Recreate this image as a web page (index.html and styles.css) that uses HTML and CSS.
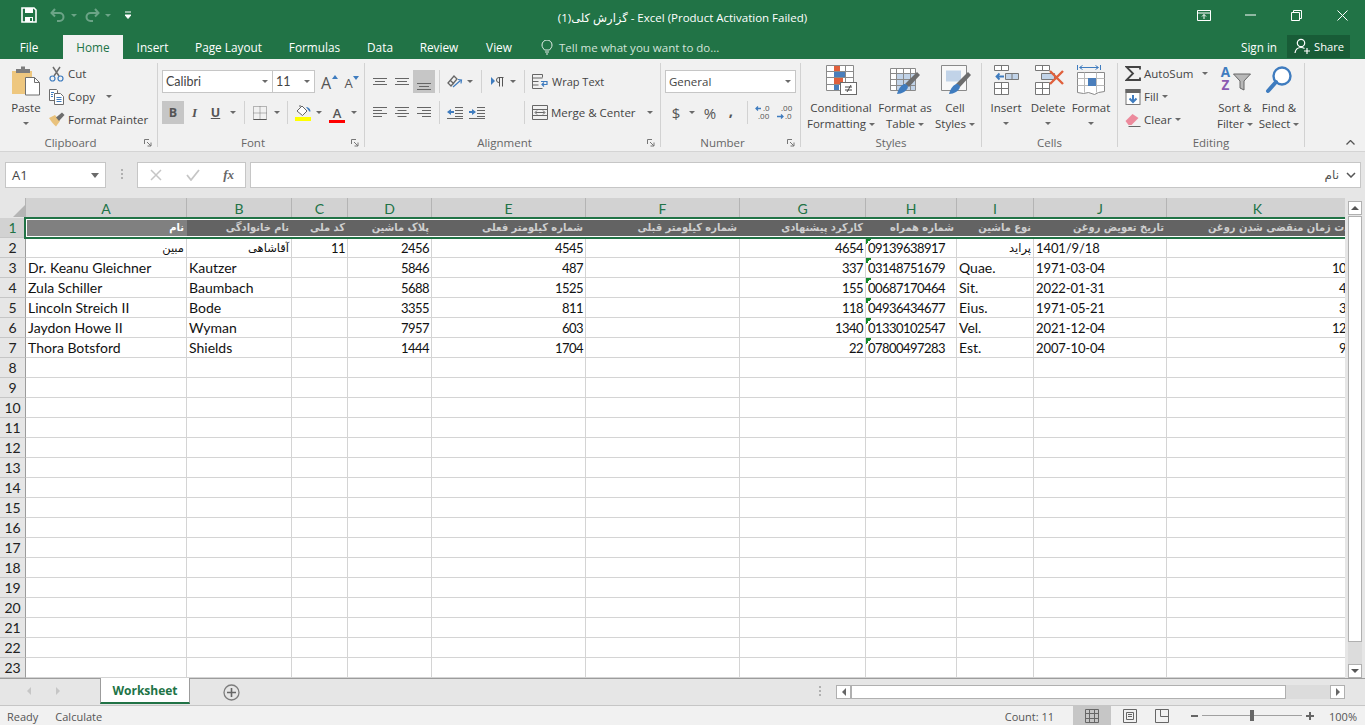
FILE: index.html
```html
<!DOCTYPE html>
<html lang="en">
<head>
<meta charset="utf-8">
<title>Excel</title>
<link rel="stylesheet" href="styles.css">
</head>
<body>
<div class="app">
  <header class="titlebar">
    <div class="qat">
      <svg class="qat-save" width="16" height="16" viewBox="0 0 16 16"><path d="M1 1h12l2 2v12H1z" fill="none" stroke="#fff" stroke-width="1.6"/><rect x="4" y="1" width="8" height="5" fill="#fff"/><rect x="4" y="10" width="8" height="5" fill="#fff"/><rect x="9" y="11" width="2" height="3" fill="#217346"/></svg>
      <svg class="qat-undo" width="16" height="14" viewBox="0 0 16 14"><path d="M5 1 1.500 5 5 8.500M2 5h7.500a4 4 0 0 1 0 8H7" fill="none" stroke="#6ca487" stroke-width="2"/></svg>
      <span class="caret caret-dim qat-c1"></span>
      <svg class="qat-redo" width="16" height="14" viewBox="0 0 16 14"><path d="M11 1l3.500 4L11 8.500M14 5H6.500a4 4 0 0 0 0 8H9" fill="none" stroke="#6ca487" stroke-width="2"/></svg>
      <span class="caret caret-dim qat-c2"></span>
      <svg class="qat-more" width="6" height="8" viewBox="0 0 6 8"><path d="M0 1h6M0 4h6l-3 3.500z" stroke="#fff" fill="#fff"/></svg>
    </div>
    <div class="doc-title">گزارش کلی(1) - Excel (Product Activation Failed)</div>
    <div class="winctl">
      <span class="winbtn"><svg width="14" height="11" viewBox="0 0 14 11"><path d="M.5.500h13v10H.5zM.5 3h13M7 9V4.500M5 6.500l2-2 2 2" fill="none" stroke="#fff"/></svg></span>
      <span class="winbtn"><svg width="11" height="2" viewBox="0 0 11 2"><path d="M0 1h11" stroke="#fff"/></svg></span>
      <span class="winbtn"><svg width="11" height="11" viewBox="0 0 11 11"><path d="M.5 2.500h8v8h-8zM2.500 2.500v-2h8v8h-2" fill="none" stroke="#fff"/></svg></span>
      <span class="winbtn"><svg width="11" height="11" viewBox="0 0 11 11"><path d="M.5.500l10 10M10.500.500l-10 10" fill="none" stroke="#fff"/></svg></span>
    </div>
  </header>

  <nav class="menubar">
    <div class="tabs">
      <span class="tab tab-file">File</span>
      <span class="tab tab-active">Home</span>
      <span class="tab">Insert</span>
      <span class="tab">Page Layout</span>
      <span class="tab">Formulas</span>
      <span class="tab">Data</span>
      <span class="tab">Review</span>
      <span class="tab">View</span>
    </div>
    <div class="tell">
      <svg width="12" height="15" viewBox="0 0 12 15"><path d="M3.500 10C2.500 8.500 1 7.500 1 5a5 5 0 0 1 10 0c0 2.500-1.500 3.500-2.500 5zM4 12h4M5 14h2" fill="none" stroke="#e3eee8"/></svg>
      <span>Tell me what you want to do...</span>
    </div>
    <span class="signin">Sign in</span>
    <span class="share">
      <svg width="17" height="17" viewBox="0 0 17 17"><circle cx="7" cy="5" r="3.700" fill="none" stroke="#fff" stroke-width="1.200"/><path d="M1 15c.5-4 3-5.500 6-5.500 1.500 0 2.500.3 3.500 1M13 10v6M10 13h6" fill="none" stroke="#fff" stroke-width="1.200"/></svg>
      Share
    </span>
  </nav>

  <section class="ribbon">
    <div class="group g-clipboard">
      <div class="body">
        <div class="big w42">
          <span class="big-icon"><svg width="30" height="31" viewBox="0 0 30 31"><rect x="1" y="6" width="20" height="23" fill="#eec77f"/><path d="M5 4h5V1.500h4V4h5v4H5z" fill="#7d7d7d"/><path d="M14.500 12.500h9l5 5v12.500h-14z" fill="#fff" stroke="#6f6f6f"/><path d="M23.500 12.500v5h5" fill="none" stroke="#6f6f6f"/></svg></span>
          <span class="big-label">Paste</span>
          <span class="big-caret"><i class="caret"></i></span>
        </div>
        <div class="list">
          <div class="li"><svg class="li-icon" width="16" height="16" viewBox="0 0 16 16"><path d="M4 1l6 9M11 1L5 10" fill="none" stroke="#6d6d6d" stroke-width="1.500"/><circle cx="3.500" cy="12.500" r="2.500" fill="none" stroke="#3f7cbf" stroke-width="1.200"/><circle cx="11.500" cy="12.500" r="2.500" fill="none" stroke="#3f7cbf" stroke-width="1.200"/></svg><span>Cut</span></div>
          <div class="li"><svg class="li-icon" width="16" height="16" viewBox="0 0 16 16"><path d="M.5.500h7l1 1v10h-8z" fill="#fff" stroke="#6d6d6d"/><path d="M5.500 4.500h6l3 3v8h-9z" fill="#fff" stroke="#6d6d6d"/><path d="M7.500 8.500h5M7.500 10.500h5M7.500 12.500h5M2 3.500h3M2 5.500h2M2 7.500h2" stroke="#3f7cbf"/></svg><span>Copy</span><i class="caret caret-copy"></i></div>
          <div class="li"><svg class="li-icon" width="16" height="15" viewBox="0 0 16 15"><path d="M0 6l6-3 5 6-4 5.500C4 12 2 9 0 6z" fill="#e9c27c"/><path d="M7 5.500l6-5 2.500 2.500-5.500 6z" fill="#6d6d6d"/></svg><span>Format Painter</span></div>
        </div>
      </div>
      <div class="foot"><span class="foot-label">Clipboard</span><span class="launcher"><svg width="8" height="8" viewBox="0 0 8 8"><path d="M.5 5V.5H5M7 7L3 3M3.500 7H7V3.500" fill="none" stroke="#777"/></svg></span></div>
    </div>

    <div class="group g-font">
      <div class="body col">
        <div class="tr first">
          <span class="sel sel-font">Calibri<i class="caret"></i></span>
          <span class="sel sel-size">11<i class="caret"></i></span>
          <span class="tool w29 grow">A<svg width="6" height="4" viewBox="0 0 6 4"><path d="M0 4l3-4 3 4z" fill="#3f7cbf"/></svg></span>
          <span class="tool w15 shrink">A<svg width="6" height="4" viewBox="0 0 6 4"><path d="M0 0l3 4 3-4z" fill="#3f7cbf"/></svg></span>
        </div>
        <div class="tr second">
          <span class="tool w22 on txt-b">B</span>
          <span class="tool w21 txt-i">I</span>
          <span class="tool w21 txt-u">U</span>
          <span class="tool w14"><i class="caret"></i></span>
          <span class="sep"></span>
          <span class="tool w21"><svg width="14" height="14" viewBox="0 0 14 14"><path d="M.5.500h13v13H.5zM7 .5v13M.5 7h13" fill="none" stroke="#777" stroke-dasharray="1 1"/><path d="M.5 13.500h13" stroke="#555"/></svg></span>
          <span class="tool w13"><i class="caret"></i></span>
          <span class="sep"></span>
          <span class="tool w22"><svg width="17" height="17" viewBox="0 0 17 17"><path d="M2 7l5-5 5 5-4.500 4.500z" fill="#fff" stroke="#666"/><path d="M5 3V1" stroke="#666"/><path d="M11 3c2 0 4 1 4.500 4 0 1-1 1-1.500 0z" fill="#3f7cbf"/><rect x="0" y="13" width="16" height="4" fill="#ff0"/></svg></span>
          <span class="tool w10"><i class="caret"></i></span>
          <span class="tool w26 color">A</span>
          <span class="tool w8"><i class="caret"></i></span>
        </div>
      </div>
      <div class="foot"><span class="foot-label">Font</span><span class="launcher"><svg width="8" height="8" viewBox="0 0 8 8"><path d="M.5 5V.5H5M7 7L3 3M3.500 7H7V3.500" fill="none" stroke="#777"/></svg></span></div>
    </div>

    <div class="group g-align">
      <div class="body col">
        <div class="tr first">
          <span class="tool w22"><svg width="14" height="8" viewBox="0 0 14 8"><path d="M0 .5h14M2 3.500h10M0 6.500h14" stroke="#666"/></svg></span>
          <span class="tool w22"><svg width="14" height="8" viewBox="0 0 14 8"><path d="M0 .5h14M2 3.500h10M0 6.500h14" stroke="#666"/></svg></span>
          <span class="tool w22 on"><svg class="push-down" width="14" height="8" viewBox="0 0 14 8"><path d="M0 .5h14M2 3.500h10M0 6.500h14" stroke="#666"/></svg></span>
          <span class="sep"></span>
          <span class="tool w22"><svg width="16" height="15" viewBox="0 0 16 15"><path d="M1 9l6-7 3 3-6 7zM3 6l4 4" fill="none" stroke="#666" stroke-width="1.300"/><path d="M6 13l8-7M11 5.500l3.500.5-.5 3.500" fill="none" stroke="#3f7cbf" stroke-width="1.200"/></svg></span>
          <span class="tool w8"><i class="caret"></i></span>
          <span class="sep sep-para"></span>
          <span class="tool w22"><svg width="13" height="10" viewBox="0 0 13 10"><path d="M0 0l4 4-4 4z" fill="#3f7cbf"/><path d="M8.500 9.500V.5M11.500 9.500V.5M12.500.5H8A2.500 2.500 0 0 0 8 5.500h1" fill="none" stroke="#555"/></svg></span>
          <span class="tool w10"><i class="caret"></i></span>
          <span class="sep sep-wrap"></span>
          <span class="btn-text"><svg width="17" height="15" viewBox="0 0 17 15"><path d="M.5 .5h10M.5 4h10M.5 7.500h6M.5 11h6M.5 14.500h10" stroke="#666"/><path d="M.5 .5v14M10.500.5v3" stroke="#666"/><path d="M9 7.500h6v3h-5M12 8.500l-2 2 2 2" fill="none" stroke="#3f7cbf" stroke-width="1.200"/></svg><span class="wrap-label">Wrap Text</span></span>
        </div>
        <div class="tr second">
          <span class="tool w22"><svg width="14" height="11" viewBox="0 0 14 11"><path d="M0 .5h14M0 3.500h9M0 6.500h14M0 9.500h9" stroke="#666"/></svg></span>
          <span class="tool w22"><svg width="14" height="11" viewBox="0 0 14 11"><path d="M0 .5h14M2.500 3.500h9M0 6.500h14M2.500 9.500h9" stroke="#666"/></svg></span>
          <span class="tool w22"><svg width="14" height="11" viewBox="0 0 14 11"><path d="M0 .5h14M5 3.500h9M0 6.500h14M5 9.500h9" stroke="#666"/></svg></span>
          <span class="sep"></span>
          <span class="tool w22"><svg width="16" height="12" viewBox="0 0 16 12"><path d="M8 .5h8M8 3.500h8M8 6.500h8M8 9.500h8M0 11.500h16" stroke="#666"/><path d="M0 5l4-3v2h3v2H4v2z" fill="#3f7cbf"/></svg></span>
          <span class="tool w22"><svg width="16" height="12" viewBox="0 0 16 12"><path d="M8 .5h8M8 3.500h8M8 6.500h8M8 9.500h8M0 11.500h16" stroke="#666"/><path d="M7 5L3 2v2H0v2h3v2z" fill="#3f7cbf"/></svg></span>
          <span class="sep sep-merge"></span>
          <span class="btn-text"><svg width="16" height="15" viewBox="0 0 16 15"><path d="M.5.500h15v14H.5zM.5 4.500h15M.5 10.500h15M3.500 7.500h9M5 5.500l-2 2 2 2M11 5.500l2 2-2 2" fill="none" stroke="#666"/></svg><span>Merge &amp; Center</span><i class="caret caret-merge"></i></span>
        </div>
      </div>
      <div class="foot"><span class="foot-label">Alignment</span><span class="launcher"><svg width="8" height="8" viewBox="0 0 8 8"><path d="M.5 5V.5H5M7 7L3 3M3.500 7H7V3.500" fill="none" stroke="#777"/></svg></span></div>
    </div>

    <div class="group g-number">
      <div class="body col">
        <div class="tr first"><span class="sel sel-format">General<i class="caret"></i></span></div>
        <div class="tr second nudge">
          <span class="tool w16 sym">$</span>
          <span class="tool w16"><i class="caret"></i></span>
          <span class="tool w20 sym">%</span>
          <span class="tool w22 sym comma"><span class="comma-mark">,</span></span>
          <span class="sep sep-num"></span>
          <span class="tool w22"><svg width="19" height="15" viewBox="0 0 19 15"><text class="dec" x="9" y="6">.0</text><text class="dec" x="4" y="14">.00</text><path d="M7 3.500H2M4 1.500l-2 2 2 2" fill="none" stroke="#3f7cbf" stroke-width="1.300"/></svg></span>
          <span class="tool w22"><svg width="19" height="15" viewBox="0 0 19 15"><text class="dec" x="5" y="6">.00</text><text class="dec" x="9" y="14">.0</text><path d="M1 11.500h6M5 9.500l2 2-2 2" fill="none" stroke="#3f7cbf" stroke-width="1.300"/></svg></span>
        </div>
      </div>
      <div class="foot"><span class="foot-label">Number</span><span class="launcher"><svg width="8" height="8" viewBox="0 0 8 8"><path d="M.5 5V.5H5M7 7L3 3M3.500 7H7V3.500" fill="none" stroke="#777"/></svg></span></div>
    </div>

    <div class="group g-styles">
      <div class="body">
        <div class="big w64">
          <span class="big-icon"><svg width="31" height="30" viewBox="0 0 31 30"><path d="M.5.500h27v25H.5zM8.500.5v25M19.500.5v25M.5 6.500h27M.5 12.500h27M.5 19.500h27" fill="#fff" stroke="#8a8a8a"/><rect x="8" y="1" width="6" height="5" fill="#e0603c"/><rect x="8" y="7" width="11" height="5" fill="#4a7ebb"/><rect x="8" y="13" width="9" height="6" fill="#e0603c"/><rect x="8" y="20" width="5" height="5" fill="#4a7ebb"/><rect x="14.500" y="17.500" width="16" height="12" fill="#fff" stroke="#6a6a6a"/><path d="M19 22h7M19 25h7M25 20l-4 7" stroke="#444" fill="none"/></svg></span>
          <span class="big-label">Conditional<br>Formatting<i class="caret caret-in"></i></span>
        </div>
        <div class="big w64">
          <span class="big-icon"><svg width="31" height="30" viewBox="0 0 31 30"><path d="M.5 3.500h25v22H.5z" fill="#fff" stroke="#8a8a8a"/><rect x="6" y="8" width="19" height="17" fill="#c1d3e8"/><path d="M6.500 3.500v22M13.500 3.500v22M20.500 3.500v22M.5 8.500h25M.5 14.500h25M.5 20.500h25" stroke="#8a8a8a" fill="none"/><path d="M15 19L27 7l3 3-11 12z" fill="#6d6d6d"/><path d="M7 29c1-4 3-8 7-10 2-.5 4 1 4 3-1 4-6 7-11 7z" fill="#3f7cbf"/></svg></span>
          <span class="big-label">Format as<br>Table<i class="caret caret-in"></i></span>
        </div>
        <div class="big w36">
          <span class="big-icon"><svg width="31" height="30" viewBox="0 0 31 30"><path d="M1.500.5h25v25h-25z" fill="#f8f8f8" stroke="#8a8a8a"/><rect x="6" y="5.500" width="15" height="11" fill="#c1d3e8"/><path d="M16 19L28 7l3 3-11 12z" fill="#6d6d6d"/><path d="M9 29c1-4 3-8 7-10 2-.5 4 1 4 3-1 4-6 7-11 7z" fill="#3f7cbf"/></svg></span>
          <span class="big-label">Cell<br>Styles<i class="caret caret-in"></i></span>
        </div>
      </div>
      <div class="foot"><span class="foot-label">Styles</span></div>
    </div>

    <div class="group g-cells">
      <div class="body">
        <div class="big w42">
          <span class="big-icon"><svg width="27" height="30" viewBox="0 0 27 30"><path d="M1.500.5h14v5h-14zM8.500.5v5M1.500 17.500h14v12h-14zM8.500 17.500v12M1.500 23.500h14" fill="#fff" stroke="#777"/><path d="M12.500 8.500h13v6h-13z" fill="#c1d3e8" stroke="#777"/><path d="M19 8.500v6" stroke="#777"/><path d="M11 11.500H4M6.500 8.500l-3 3 3 3" fill="none" stroke="#3f7cbf" stroke-width="1.800"/></svg></span>
          <span class="big-label">Insert</span>
          <span class="big-caret"><i class="caret"></i></span>
        </div>
        <div class="big w42">
          <span class="big-icon nudge-del"><svg width="32" height="30" viewBox="0 0 32 30"><path d="M1.500.5h14v5h-14zM8.500.5v5M1.500 17.500h14v12h-14zM8.500 17.500v12M1.500 23.500h14" fill="#fff" stroke="#777"/><path d="M7.500 8.500h13v6h-13z" fill="#c1d3e8" stroke="#777"/><path d="M16 6l13 13M29 6L16 19" stroke="#e0603c" stroke-width="2.400"/></svg></span>
          <span class="big-label">Delete</span>
          <span class="big-caret"><i class="caret"></i></span>
        </div>
        <div class="big w44">
          <span class="big-icon"><svg width="29" height="30" viewBox="0 0 29 30"><path d="M.5 0v5M23.500 0v5M3 2.500h18M5.500.5l-3 2 3 2M18.500.5l3 2-3 2" fill="none" stroke="#3f7cbf"/><path d="M.5 7.500h27v19l-6 1-4 2-6-2-5 1-6-1z" fill="#fff" stroke="#8a8a8a"/><path d="M.5 13.500h27M.5 20.500h27M7.500 7.500v20M19.500 7.500v20" fill="none" stroke="#bbb"/><rect x="11" y="13" width="8" height="8" fill="#4a7ebb"/></svg></span>
          <span class="big-label">Format</span>
          <span class="big-caret"><i class="caret"></i></span>
        </div>
      </div>
      <div class="foot"><span class="foot-label">Cells</span></div>
    </div>

    <div class="group g-edit">
      <div class="body">
        <div class="list list-edit">
          <div class="li"><svg class="li-icon" width="16" height="15" viewBox="0 0 16 15"><path d="M15 3.500V1H1.500L8 7.500 1.500 14H15v-2.500" fill="none" stroke="#444" stroke-width="1.800"/></svg><span>AutoSum</span><i class="caret caret-sum"></i></div>
          <div class="li"><svg class="li-icon" width="15" height="16" viewBox="0 0 15 16"><rect x=".5" y=".5" width="14" height="15" fill="#fff" stroke="#777"/><rect width="15" height="4" fill="#666"/><path d="M7.500 6v7M4 9.500l3.500 3.500L11 9.500" fill="none" stroke="#3f7cbf" stroke-width="2"/></svg><span>Fill</span><i class="caret caret-in"></i></div>
          <div class="li"><svg class="li-icon" width="15" height="14" viewBox="0 0 15 14"><path d="M0 8l7-7 6 4-7 7H3z" fill="#ec8a9c"/><path d="M3 13.500h12" stroke="#666"/></svg><span>Clear</span><i class="caret caret-in"></i></div>
        </div>
        <div class="big w44">
          <span class="big-icon sort-icon"><span class="sort-letters"><span class="sort-a">A</span><span class="sort-z">Z</span></span><svg class="funnel" width="18" height="18" viewBox="0 0 18 18"><path d="M.5 1h17L11 8v9l-4-2V8z" fill="#b8b8b8" stroke="#666"/></svg></span>
          <span class="big-label">Sort &amp;<br>Filter<i class="caret caret-in"></i></span>
        </div>
        <div class="big w44">
          <span class="big-icon"><svg width="28" height="30" viewBox="0 0 28 30"><circle cx="17" cy="11" r="8.500" fill="#fff" stroke="#3f7cbf" stroke-width="2.400"/><path d="M11 17L3 26" stroke="#3f7cbf" stroke-width="4" stroke-linecap="round"/></svg></span>
          <span class="big-label">Find &amp;<br>Select<i class="caret caret-in"></i></span>
        </div>
      </div>
      <div class="foot"><span class="foot-label">Editing</span></div>
    </div>

    <div class="collapse"><svg width="9" height="5" viewBox="0 0 9 5"><path d="M.5 4.500l4-4 4 4" fill="none" stroke="#555" stroke-width="1.300"/></svg></div>
  </section>

  <section class="formula">
    <div class="namebox"><span>A1</span><i class="caret caret-big"></i></div>
    <div class="dots"><i></i><i></i><i></i></div>
    <div class="fx-btns">
      <svg width="12" height="12" viewBox="0 0 12 12"><path d="M1 1l10 10M11 1L1 11" stroke="#c6c6c6" stroke-width="1.500"/></svg>
      <svg width="14" height="12" viewBox="0 0 14 12"><path d="M1 6l4 5 8-10" fill="none" stroke="#c6c6c6" stroke-width="1.800"/></svg>
      <span class="fx">fx</span>
    </div>
    <div class="fx-input"><span class="fx-val" dir="rtl">نام</span><svg width="10" height="6" viewBox="0 0 10 6"><path d="M1 1l4 4 4-4" fill="none" stroke="#555" stroke-width="1.500"/></svg></div>
  </section>

  <section class="sheet">
    <div class="grid-wrap">
      <table class="grid">
        <colgroup><col class="c-h"><col class="c-a"><col class="c-b"><col class="c-c"><col class="c-d"><col class="c-e"><col class="c-f"><col class="c-g"><col class="c-i8"><col class="c-i"><col class="c-j"><col class="c-k"></colgroup>
        <thead>
          <tr><th class="corner"><svg width="12" height="12" viewBox="0 0 12 12"><path d="M12 0v12H0z" fill="#b5b5b5"/></svg></th><th>A</th><th>B</th><th>C</th><th>D</th><th>E</th><th>F</th><th>G</th><th>H</th><th>I</th><th>J</th><th class="th-k">K</th></tr>
        </thead>
        <tbody>
          <tr class="hdr"><th class="rowsel">1</th><td class="active" dir="rtl">نام</td><td dir="rtl">نام خانوادگی</td><td dir="rtl">کد ملی</td><td dir="rtl">پلاک ماشین</td><td dir="rtl">شماره کیلومتر فعلی</td><td dir="rtl">شماره کیلومتر قبلی</td><td dir="rtl">کارکرد پیشنهادی</td><td dir="rtl">شماره همراه</td><td dir="rtl">نوع ماشین</td><td dir="rtl">تاریخ تعویض روغن</td><td dir="rtl">مدت زمان منقضی شدن روغن</td></tr>
          <tr><th>2</th><td class="fa" dir="rtl">مبین</td><td class="fa" dir="rtl">آقاشاهی</td><td class="n">11</td><td class="n">2456</td><td class="n">4545</td><td></td><td class="n">4654</td><td class="tag">09139638917</td><td class="fa" dir="rtl">پراید</td><td class="dt">1401/9/18</td><td></td></tr>
          <tr><th>3</th><td>Dr. Keanu Gleichner</td><td>Kautzer</td><td></td><td class="n">5846</td><td class="n">487</td><td></td><td class="n">337</td><td class="tag">03148751679</td><td>Quae.</td><td class="dt">1971-03-04</td><td class="n nk">10</td></tr>
          <tr><th>4</th><td>Zula Schiller</td><td>Baumbach</td><td></td><td class="n">5688</td><td class="n">1525</td><td></td><td class="n">155</td><td class="tag">00687170464</td><td>Sit.</td><td class="dt">2022-01-31</td><td class="n nk">4</td></tr>
          <tr><th>5</th><td>Lincoln Streich II</td><td>Bode</td><td></td><td class="n">3355</td><td class="n">811</td><td></td><td class="n">118</td><td class="tag">04936434677</td><td>Eius.</td><td class="dt">1971-05-21</td><td class="n nk">3</td></tr>
          <tr><th>6</th><td>Jaydon Howe II</td><td>Wyman</td><td></td><td class="n">7957</td><td class="n">603</td><td></td><td class="n">1340</td><td class="tag">01330102547</td><td>Vel.</td><td class="dt">2021-12-04</td><td class="n nk">12</td></tr>
          <tr><th>7</th><td>Thora Botsford</td><td>Shields</td><td></td><td class="n">1444</td><td class="n">1704</td><td></td><td class="n">22</td><td class="tag">07800497283</td><td>Est.</td><td class="dt">2007-10-04</td><td class="n nk">9</td></tr>
          <tr><th>8</th><td></td><td></td><td></td><td></td><td></td><td></td><td></td><td></td><td></td><td></td><td></td></tr>
          <tr><th>9</th><td></td><td></td><td></td><td></td><td></td><td></td><td></td><td></td><td></td><td></td><td></td></tr>
          <tr><th>10</th><td></td><td></td><td></td><td></td><td></td><td></td><td></td><td></td><td></td><td></td><td></td></tr>
          <tr><th>11</th><td></td><td></td><td></td><td></td><td></td><td></td><td></td><td></td><td></td><td></td><td></td></tr>
          <tr><th>12</th><td></td><td></td><td></td><td></td><td></td><td></td><td></td><td></td><td></td><td></td><td></td></tr>
          <tr><th>13</th><td></td><td></td><td></td><td></td><td></td><td></td><td></td><td></td><td></td><td></td><td></td></tr>
          <tr><th>14</th><td></td><td></td><td></td><td></td><td></td><td></td><td></td><td></td><td></td><td></td><td></td></tr>
          <tr><th>15</th><td></td><td></td><td></td><td></td><td></td><td></td><td></td><td></td><td></td><td></td><td></td></tr>
          <tr><th>16</th><td></td><td></td><td></td><td></td><td></td><td></td><td></td><td></td><td></td><td></td><td></td></tr>
          <tr><th>17</th><td></td><td></td><td></td><td></td><td></td><td></td><td></td><td></td><td></td><td></td><td></td></tr>
          <tr><th>18</th><td></td><td></td><td></td><td></td><td></td><td></td><td></td><td></td><td></td><td></td><td></td></tr>
          <tr><th>19</th><td></td><td></td><td></td><td></td><td></td><td></td><td></td><td></td><td></td><td></td><td></td></tr>
          <tr><th>20</th><td></td><td></td><td></td><td></td><td></td><td></td><td></td><td></td><td></td><td></td><td></td></tr>
          <tr><th>21</th><td></td><td></td><td></td><td></td><td></td><td></td><td></td><td></td><td></td><td></td><td></td></tr>
          <tr><th>22</th><td></td><td></td><td></td><td></td><td></td><td></td><td></td><td></td><td></td><td></td><td></td></tr>
          <tr><th>23</th><td></td><td></td><td></td><td></td><td></td><td></td><td></td><td></td><td></td><td></td><td></td></tr>
        </tbody>
      </table>
      <div class="selection"></div>
    </div>
    <div class="vscroll">
      <span class="sb-btn"><i class="tri-up"></i></span>
      <span class="sb-thumb"></span>
      <span class="sb-track"></span>
      <span class="sb-btn"><i class="tri-down"></i></span>
    </div>
  </section>

  <section class="sheetbar">
    <div class="nav-arrows"><i class="tri-left"></i><i class="tri-right"></i></div>
    <div class="sheet-tab">Worksheet</div>
    <svg class="add-sheet" width="17" height="17" viewBox="0 0 17 17"><circle cx="8.500" cy="8.500" r="7.500" fill="none" stroke="#7d7d7d" stroke-width="1.300"/><path d="M8.500 4v9M4 8.500h9" stroke="#666" stroke-width="1.600"/></svg>
    <div class="dots dots-h"><i></i><i></i><i></i></div>
    <div class="hscroll">
      <span class="sb-btn h"><i class="tri-left dark"></i></span>
      <span class="sb-thumb h"></span>
      <span class="sb-track h"></span>
      <span class="sb-btn h"><i class="tri-right dark"></i></span>
    </div>
  </section>

  <footer class="status">
    <span class="st-ready">Ready</span>
    <span class="st-calc">Calculate</span>
    <span class="st-count">Count: 11</span>
    <span class="view view-on"><svg width="14" height="14" viewBox="0 0 14 14"><path d="M.5.500h13v13H.5zM4.500.5v13M9.500.5v13M.5 4.500h13M.5 9.500h13" fill="none" stroke="#666"/></svg></span>
    <span class="view"><svg width="14" height="14" viewBox="0 0 14 14"><path d="M.5.500h13v13H.5zM3.500 3.500h7v7h-7zM5 5.500h4M5 7.500h4" fill="none" stroke="#666"/></svg></span>
    <span class="view view-narrow"><svg width="14" height="14" viewBox="0 0 14 14"><path d="M.5.500h13v13H.5zM5.500.5v7h8" fill="none" stroke="#666"/></svg></span>
    <span class="zoom-m"></span>
    <span class="slider"><i class="line l1"></i><i class="knob"></i><i class="line l2"></i></span>
    <span class="zoom-p"></span>
    <span class="st-zoom">100%</span>
  </footer>
</div>
</body>
</html>
```

FILE: styles.css
```css
* { box-sizing: border-box; }
html, body { margin: 0; padding: 0; height: 100%; overflow: hidden; background: #f1f1f1; }
body { font-family: "Open Sans", "DejaVu Sans", sans-serif; font-size: 11.5px; color: #444; }
i { font-style: normal; }
svg { display: block; flex: none; shape-rendering: geometricPrecision; }
.app { width: 1365px; height: 725px; display: flex; flex-direction: column; overflow: hidden; }

/* title bar */
.titlebar { height: 35px; background: #217346; color: #fff; display: grid; grid-template-columns: 1fr auto 1fr; flex: none; }
.qat { display: flex; align-items: center; height: 30px; padding-left: 21px; }
.qat-undo { margin-left: 13px; }
.qat-c1 { margin-left: 5px; }
.qat-redo { margin-left: 7px; }
.qat-c2 { margin-left: 5px; }
.qat-more { margin-left: 14px; }
.doc-title { font-size: 11.5px; line-height: 36px; color: #fff; }
.winctl { display: flex; justify-content: flex-end; }
.winbtn { width: 46px; height: 30px; display: flex; align-items: center; justify-content: center; }

/* menu */
.menubar { height: 24px; background: #217346; color: #fff; display: flex; align-items: stretch; flex: none; }
.tabs { display: grid; grid-template-columns: 63px 60px 59px 93px 79px 52px 66px 54px; font-size: 11.8px; }
.tab { text-align: center; line-height: 25px; color: #fff; }
.tab-file { padding-right: 5px; }
.tab-active { background: #f1f1f1; color: #217346; }
.tell { display: flex; align-items: center; gap: 6px; padding-left: 15px; color: #d3e3da; flex: 1; font-size: 11.5px; }
.signin { line-height: 25px; margin-right: 10px; font-size: 11.7px; }
.share { width: 63px; height: 23px; margin-right: 15px; background: #185c37; display: flex; align-items: center; gap: 3px; padding-left: 7px; font-size: 11.2px; }

/* ribbon */
.ribbon { height: 93px; background: #f1f1f1; border-bottom: 1px solid #d4d4d4; display: flex; flex: none; }
.group { display: flex; flex-direction: column; margin-top: 4px; height: 84px; border-right: 1px solid #d2d2d2; }
.body { height: 75px; margin-top: -4px; display: flex; flex: none; }
.col { flex-direction: column; }
.foot { display: flex; height: 17px; align-items: center; flex: none; }
.foot-label { flex: 1; text-align: center; color: #666; font-size: 11.5px; }
.launcher { width: 16px; height: 17px; display: flex; align-items: center; padding-left: 3px; }
.g-clipboard { width: 158px; }
.g-clipboard .body { padding-left: 5px; }
.g-font { width: 207px; }
.g-font .tr { padding-left: 4px; }
.g-align { width: 296px; }
.g-align .tr { padding-left: 4px; }
.g-number { width: 140px; }
.g-number .tr { padding-left: 4px; }
.g-number .nudge { padding-left: 7px; }
.g-styles { width: 181px; }
.g-styles .body { padding-left: 8px; }
.g-cells { width: 136px; }
.g-cells .body { padding-left: 3px; }
.g-edit { width: 187px; }
.g-edit .body { padding-left: 7px; }
.collapse { flex: 1; display: flex; align-items: flex-end; justify-content: flex-end; padding: 0 10px 6px 0; }

.big { display: flex; flex-direction: column; align-items: center; padding-top: 6px; text-align: center; white-space: nowrap; }
.big-icon { height: 35px; display: flex; align-items: flex-start; justify-content: center; }
.nudge-del { padding-left: 4px; }
.big-label { line-height: 16px; display: block; }
.big-caret { display: block; line-height: 0; height: 16px; padding-top: 6px; }
.w42 { width: 42px; }
.w64 { width: 64px; }
.w36 { width: 36px; }
.w44 { width: 44px; }
.w8 { width: 8px; }
.w10 { width: 10px; }
.w13 { width: 13px; }
.w14 { width: 14px; }
.w15 { width: 15px; }
.w16 { width: 16px; }
.w20 { width: 20px; }
.w21 { width: 21px; }
.w22 { width: 22px; }
.w26 { width: 26px; }
.w29 { width: 29px; }

.list { width: 104px; padding-top: 3px; margin-left: 2px; }
.list-edit { width: 88px; margin-left: 0; }
.li { height: 23px; display: flex; align-items: center; }
.li-icon { margin-right: 3px; }
.li > svg { width: 16px; }

.caret { display: inline-block; width: 0; height: 0; border-style: solid; border-color: #6a6a6a transparent transparent; border-width: 3.500px 3.500px 0; vertical-align: middle; }
.caret-dim { border-top-color: #6ca487; }
.caret-in { margin-left: 3px; }
.caret-copy { margin-left: 11px; }
.caret-sum { margin-left: 9px; }
.caret-merge { margin-left: 8px; }
.caret-big { border-width: 5px 4.500px 0; }

.tr { display: flex; align-items: center; height: 23px; flex: none; }
.first { margin-top: 11px; }
.second { margin-top: 8px; }
.tool { height: 23px; display: flex; align-items: center; justify-content: center; flex: none; }
.on { background: #c6c6c6; }
.push-down { margin-top: 10px; }
.sep { width: 1px; height: 23px; background: #d2d2d2; margin: 0 4px; flex: none; }
.sep-para { margin-left: 7px; }
.sep-wrap { margin-left: 6px; margin-right: 2px; }
.sep-merge { margin-left: 36px; margin-right: 2px; }
.sep-num { margin-left: 5px; }
.btn-text { display: flex; align-items: center; gap: 3px; padding-left: 5px; white-space: nowrap; }
.wrap-label { font-size: 11px; }
.sel { height: 23px; background: #fff; border: 1px solid #c6c6c6; display: flex; align-items: center; justify-content: space-between; padding: 0 4px 0 3px; font-family: "Lato", sans-serif; font-size: 12.5px; flex: none; }
.sel-font { width: 111px; }
.sel-size { width: 43px; margin-left: -1px; }
.sel-format { width: 131px; font-family: "Open Sans", sans-serif; font-size: 11.5px; }
.grow { font-size: 16px; align-items: flex-end; color: #555; line-height: 20px; }
.grow svg { margin: 0 0 14px 1px; }
.shrink { font-size: 13px; color: #555; align-items: flex-end; line-height: 19px; }
.shrink svg { margin: 0 0 13px 0; }
.txt-b { font-weight: 700; font-size: 12.500px; color: #555; }
.txt-i { font-style: italic; font-size: 13px; font-family: "Liberation Serif", serif; color: #555; font-weight: 700; }
.txt-u { text-decoration: underline; font-weight: 700; font-size: 12.500px; color: #555; }
.color { font-size: 13px; font-weight: 600; color: #555; line-height: 14px; background: linear-gradient(#f00, #f00) no-repeat center 19px / 16px 3px; }
.sym { font-size: 15px; color: #555; }
.comma { font-weight: 700; }
.comma-mark { margin-top: -6px; }
.dec { font: 8px "Open Sans", sans-serif; fill: #555; }
.sort-icon { gap: 1px; padding-top: 1px; }
.sort-letters { display: flex; flex-direction: column; width: 13px; font: 700 13.5px/13px "Open Sans", sans-serif; text-align: center; }
.sort-a { color: #3f7cbf; }
.sort-z { color: #8a5ab0; }
.funnel { margin-top: 7px; }

/* formula */
.formula { height: 46px; background: #e6e6e6; display: flex; padding: 10px 4px 0 5px; flex: none; }
.namebox { width: 101px; height: 26px; background: #fff; border: 1px solid #c6c6c6; display: flex; align-items: center; justify-content: space-between; padding: 0 6px; font-size: 13px; color: #444; }
.dots { width: 31px; display: flex; flex-direction: column; gap: 2px; align-items: center; padding-top: 7px; }
.dots i { width: 2px; height: 2px; background: #b0b0b0; }
.fx-btns { width: 109px; height: 26px; background: #fff; border: 1px solid #c6c6c6; display: flex; align-items: center; justify-content: space-between; padding: 0 11px 0 12px; }
.fx { font: italic 700 13px "Liberation Serif", serif; color: #666; }
.fx-input { flex: 1; height: 26px; margin-left: 4px; background: #fff; border: 1px solid #c6c6c6; display: flex; align-items: center; justify-content: flex-end; padding-right: 4px; gap: 7px; }
.fx-val { font: 12px "DejaVu Sans", sans-serif; color: #555; }

/* sheet */
.sheet { height: 480px; display: flex; background: #e6e6e6; flex: none; }
.grid-wrap { width: 1345px; height: 480px; overflow: hidden; position: relative; background: #fff; }
.grid { table-layout: fixed; border-collapse: separate; border-spacing: 0; width: 1359px; font: 14px "Lato", "DejaVu Sans", sans-serif; color: #111; }
.c-h { width: 26px; }
.c-a { width: 161px; }
.c-b { width: 105px; }
.c-c { width: 56px; }
.c-d { width: 84px; }
.c-e { width: 154px; }
.c-f { width: 154px; }
.c-g { width: 126px; }
.c-i8 { width: 91px; }
.c-i { width: 77px; }
.c-j { width: 133px; }
.c-k { width: 192px; }
.grid tr { height: 20px; }
.grid td { height: 20px; padding: 1px 2px 0; border-right: 1px solid #d4d4d4; border-bottom: 1px solid #d4d4d4; overflow: hidden; white-space: nowrap; line-height: 18px; text-align: left; }
.grid th { height: 20px; padding: 0; font-weight: 400; overflow: hidden; line-height: 19px; text-align: center; }
.grid thead th { background: #d2d2d2; color: #217346; border-right: 1px solid #b4b4b4; }
.grid thead .corner { background: #e6e6e6; padding: 0; }
.grid thead .th-k { padding-right: 10px; }
.corner svg { margin: 6px 0 0 13px; }
.grid tbody th { background: #e6e6e6; color: #222; border-right: 1px solid #9c9c9c; border-bottom: 1px solid #c6c6c6; padding-top: 1px; line-height: 18px; }
.grid tbody .rowsel { background: #d2d2d2; color: #217346; }
.hdr td { background: #636363; color: #cfcfcf; border-color: transparent; text-align: right; font: 700 11px/18px "DejaVu Sans Condensed", "DejaVu Sans", sans-serif; }
.hdr .active { background: #808080; color: #fff; }
.n { text-align: right !important; font-size: 13px; letter-spacing: -0.55px; }
.nk { padding-right: 12px !important; }
.dt { font-size: 13px; letter-spacing: -0.1px; }
.fa { text-align: right !important; font: 11.5px/18px "DejaVu Sans", sans-serif; }
.tag { font-size: 13px; letter-spacing: -0.55px; background: linear-gradient(135deg, #118a2a 50%, transparent 50%) no-repeat 0 0 / 6px 6px; }
.selection { position: absolute; left: 24px; top: 19px; width: 1330px; height: 22px; border: 2px solid #217346; box-shadow: inset 0 0 0 1px #fff; pointer-events: none; }

.vscroll { width: 20px; padding: 3px 3px 0 3px; display: flex; flex-direction: column; }
.sb-btn { width: 14px; height: 14px; background: #fff; border: 1px solid #b0b0b0; display: flex; align-items: center; justify-content: center; flex: none; }
.sb-thumb { width: 14px; height: 427px; background: #fff; border: 1px solid #b0b0b0; margin-top: 1px; }
.sb-track { flex: 1; background: #dcdcdc; }
.vscroll .sb-track { height: 22px; flex: none; }
.tri-up { border: solid transparent; border-width: 0 4px 4px; border-bottom-color: #555; width: 0; height: 0; }
.tri-down { border: solid transparent; border-width: 4px 4px 0; border-top-color: #555; width: 0; height: 0; }
.tri-left { border: solid transparent; border-width: 4px 4px 4px 0; border-right-color: #c6c6c6; width: 0; height: 0; display: block; }
.tri-right { border: solid transparent; border-width: 4px 0 4px 4px; border-left-color: #c6c6c6; width: 0; height: 0; display: block; }
.tri-left.dark { border-right-color: #666; }
.tri-right.dark { border-left-color: #666; }

/* sheet tabs */
.sheetbar { height: 28px; background: #e6e6e6; border-top: 1px solid #9c9c9c; border-bottom: 1px solid #c6c6c6; display: flex; flex: none; }
.nav-arrows { width: 100px; display: flex; align-items: center; padding: 0 0 2px 27px; gap: 25px; }
.sheet-tab { width: 90px; height: 26px; background: #fff; border: 1px solid #9c9c9c; border-top: 0; border-bottom: 2px solid #217346; color: #217346; font-weight: 700; font-size: 12px; text-align: center; line-height: 23px; margin-top: -1px; padding-top: 1px; }
.add-sheet { margin: 5px 0 0 33px; }
.dots-h { width: 16px; margin-left: 572px; padding-top: 7px; }
.hscroll { width: 509px; margin-left: 8px; margin-top: 6px; height: 14px; display: flex; }
.sb-btn.h { width: 15px; }
.sb-thumb.h { width: 435px; height: 14px; margin: 0; }

/* status */
.status { flex: 1; background: #f1f1f1; display: flex; align-items: center; font-size: 11px; color: #555; }
.st-ready { margin: 1px 0 0 7px; }
.st-calc { margin: 1px 0 0 17px; }
.st-count { margin: 1px 19px 0 auto; }
.view { width: 38px; height: 19px; display: flex; align-items: center; justify-content: center; }
.view-on { background: #c6c6c6; }
.view-narrow { width: 26px; }
.zoom-m { width: 7px; height: 2px; background: #666; margin-left: 16px; }
.slider { width: 100px; margin-left: 4px; display: flex; align-items: center; }
.line { height: 1px; background: #a0a0a0; display: block; }
.l1 { width: 48px; }
.l2 { width: 48px; }
.knob { width: 4px; height: 11px; background: #666; display: block; }
.zoom-p { width: 8px; height: 8px; margin-left: 4px; background: linear-gradient(#666, #666) center / 100% 2px no-repeat, linear-gradient(#666, #666) center / 2px 100% no-repeat; }
.st-zoom { margin: 1px 8px 0 15px; }
```
